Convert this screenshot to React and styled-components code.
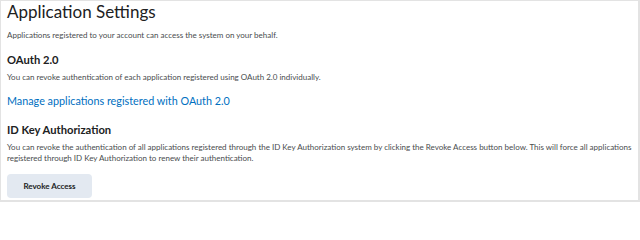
import React from "react";
import styled, { createGlobalStyle } from "styled-components";

const Global = createGlobalStyle`
  html, body { margin: 0; padding: 0; background: #fff; }
  body { font-family: Lato, "Open Sans", sans-serif; color: #494c4e; }
  * { box-sizing: border-box; }
`;

const Frame = styled.main`
  width: 640px;
  height: 202px;
  border-style: solid;
  border-color: #e3e3e3;
  border-width: 1px 2px 2px 1px;
  padding: 1px 2px 0 6px;
  display: flex;
  flex-direction: column;
  overflow: hidden;
`;

const Title = styled.h1`
  margin: 0;
  font-size: 17px;
  font-weight: 400;
  line-height: 20px;
  color: #202122;
`;

const Intro = styled.p`
  margin: 8px 0 0;
  font-size: 8px;
  line-height: 11px;
`;

const Section = styled.section`
  display: flex;
  flex-direction: column;
  align-items: flex-start;
  margin-top: ${(p) => p.$gap}px;
`;

const Heading = styled.h2`
  margin: 0;
  font-size: 11.2px;
  font-weight: 700;
  line-height: 14px;
  color: #202122;
`;

const Para = styled.p`
  margin: 4.5px 0 0;
  font-size: 8px;
  line-height: 11px;
  color: #494c4e;
`;

const Link = styled.a`
  margin-top: 11.5px;
  font-size: 10.8px;
  line-height: 14px;
  color: #006fbf;
  text-decoration: none;
`;

const Button = styled.button`
  margin-top: 10.5px;
  width: 85px;
  height: 23.5px;
  border: none;
  border-radius: 4px;
  background: #e3e9f1;
  font-family: Lato, sans-serif;
  font-weight: 700;
  font-size: 8px;
  color: #202122;
  padding: 0;
  cursor: pointer;
`;

export default function App() {
  return (
    <>
      <Global />
      <Frame>
        <Title>Application Settings</Title>
        <Intro>Applications registered to your account can access the system on your behalf.</Intro>
        <Section $gap={12}>
          <Heading>OAuth 2.0</Heading>
          <Para>You can revoke authentication of each application registered using OAuth 2.0 individually.</Para>
          <Link href="#">Manage applications registered with OAuth 2.0</Link>
        </Section>
        <Section $gap={15}>
          <Heading>ID Key Authorization</Heading>
          <Para>
            You can revoke the authentication of all applications registered through the ID Key Authorization system by clicking the Revoke Access button below. This will force all applications registered through ID Key Authorization to renew their authentication.
          </Para>
          <Button>Revoke Access</Button>
        </Section>
      </Frame>
    </>
  );
}
